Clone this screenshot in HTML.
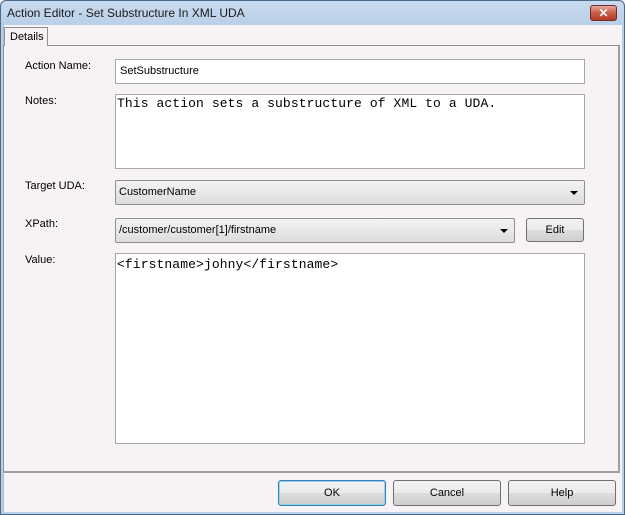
<!DOCTYPE html>
<html><head><style>
*{box-sizing:border-box;margin:0;padding:0}
body{width:625px;height:515px;overflow:hidden;background:#f6f2f6;font-family:"Liberation Sans",sans-serif;font-size:11px;color:#000;position:relative}
.frame{position:absolute;left:0;top:0;width:625px;height:515px;border:1px solid #4a6a8c;border-radius:6px 6px 0 0;background:linear-gradient(#c8daee,#b9cfe8 25px);}
.client{position:absolute;left:3px;top:25px;right:3px;bottom:3px;background:#f6f2f6;border-left:1px solid #a9bdd4}
.title{position:absolute;left:7px;top:6px;font-size:12px;color:#1b1b1b}
.close{position:absolute;left:590px;top:5px;width:27px;height:16px;border:1px solid #6b2e2a;border-radius:3px;background:linear-gradient(#e8a89a,#c85a46 50%,#b33c2a);color:#fff;font-weight:bold;text-align:center;font-size:12px;line-height:14px}
.abs{position:absolute}
.tab{left:4px;top:27px;width:44px;height:19px;border:1px solid #919191;border-bottom:none;background:#f6f2f6;padding:3px 0 0 5px;z-index:2}
.panel{left:3px;top:45px;width:617px;height:428px;border:1px solid #919191;border-bottom:2px solid #a0a0a0;border-right:2px solid #a0a0a0}
.lbl{position:absolute;left:25px}
.box{position:absolute;background:#fff;border:1px solid #a7a7a7;}
.mono{font-family:"Liberation Mono",monospace;font-size:13px;letter-spacing:0.1px}
.combo{position:absolute;border:1px solid #8f8f8f;border-radius:2px;background:linear-gradient(#f3f3f3,#e8e8e8 50%,#dcdcdc);padding:5px 3px}
.arr{position:absolute;right:6px;top:10px;width:0;height:0;border-left:4px solid transparent;border-right:4px solid transparent;border-top:4px solid #000}
.btn{position:absolute;border:1px solid #707070;border-radius:3px;background:linear-gradient(#f2f2f2,#ebebeb 50%,#dddddd 51%,#cfcfcf);text-align:center;line-height:22px}
</style></head><body>
<div class="frame"></div>
<div class="title">Action Editor - Set Substructure In XML UDA</div>
<div class="close">✕</div>
<div class="client"></div>
<div class="abs panel"></div>
<div class="abs tab">Details</div>
<div class="lbl" style="top:60px">Action Name:</div>
<div class="box" style="left:115px;top:59px;width:470px;height:25px;padding:5px 4px">SetSubstructure</div>
<div class="lbl" style="top:95px">Notes:</div>
<div class="box mono" style="left:115px;top:94px;width:470px;height:75px;padding:1px 1px">This action sets a substructure of XML to a UDA.</div>
<div class="lbl" style="top:180px">Target UDA:</div>
<div class="combo" style="left:115px;top:180px;width:470px;height:25px">CustomerName<div class="arr"></div></div>
<div class="lbl" style="top:218px">XPath:</div>
<div class="combo" style="left:115px;top:218px;width:400px;height:25px">/customer/customer[1]/firstname<div class="arr"></div></div>
<div class="btn" style="left:526px;top:218px;width:58px;height:24px">Edit</div>
<div class="lbl" style="top:254px">Value:</div>
<div class="box mono" style="left:115px;top:253px;width:470px;height:191px;padding:3px 1px">&lt;firstname&gt;johny&lt;/firstname&gt;</div>
<div class="btn" style="left:278px;top:480px;width:108px;height:26px;border-color:#3c7fb1;box-shadow:inset 0 0 0 1px #8fd3f2;line-height:24px">OK</div>
<div class="btn" style="left:393px;top:480px;width:108px;height:26px;line-height:24px">Cancel</div>
<div class="btn" style="left:508px;top:480px;width:108px;height:26px;line-height:24px">Help</div>
</body></html>
